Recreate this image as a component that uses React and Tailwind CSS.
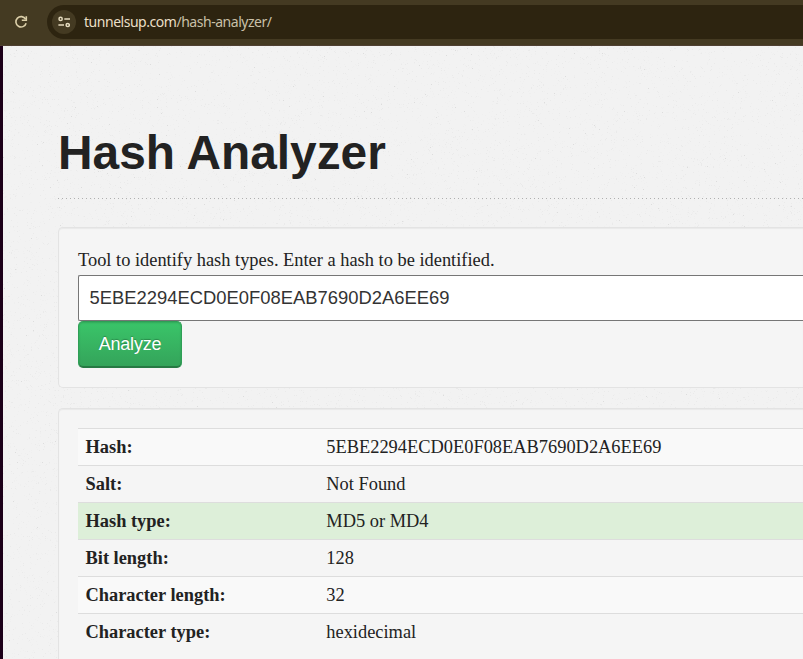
import React from "react";

const rows = [
  ["Hash:", "5EBE2294ECD0E0F08EAB7690D2A6EE69", "bg-[#f9f9f9]"],
  ["Salt:", "Not Found", ""],
  ["Hash type:", "MD5 or MD4", "bg-[#ddefd9]"],
  ["Bit length:", "128", ""],
  ["Character length:", "32", "bg-[#f9f9f9]"],
  ["Character type:", "hexidecimal", ""],
];

// Fine paper grain: deterministic one-pixel specks.
function specks(count, seed) {
  let a = seed;
  const next = () => {
    a = (a + 0x6d2b79f5) | 0;
    let t = Math.imul(a ^ (a >>> 15), 1 | a);
    t = (t + Math.imul(t ^ (t >>> 7), 61 | t)) ^ t;
    return ((t ^ (t >>> 14)) >>> 0) / 4294967296;
  };
  let d = "";
  for (let i = 0; i < count; i++) {
    d += `M${Math.floor(next() * 800)} ${Math.floor(next() * 613)}h1v1h-1z`;
  }
  return d;
}
const light = specks(18000, 7);
const mid = specks(9000, 91);
const dark = specks(500, 333);

function Grain() {
  return (
    <svg className="absolute inset-0" width="800" height="613" shapeRendering="crispEdges" aria-hidden="true">
      <path d={light} fill="#efefef" />
      <path d={mid} fill="#eaeaea" />
      <path d={dark} fill="#dddddd" />
    </svg>
  );
}

function BrowserBar() {
  return (
    <header className="flex h-[46px] shrink-0 items-start border-b border-[#4f4032] bg-[#443a22] pt-[5px]">
      <svg className="mt-[10px] ml-[14px] shrink-0" width="14" height="14" viewBox="0 0 14 14" fill="none" stroke="#dccfa9" strokeWidth="1.6">
        <path d="M11.6 4.2A5.2 5.2 0 1 0 12.1 8.2" />
        <path d="M12.3 1.2V5.3H7.8" />
      </svg>
      <div className="ml-[19px] flex h-[34px] flex-1 items-center rounded-l-full bg-[#2d2410] pl-[5px]">
        <span className="flex size-6 items-center justify-center rounded-full bg-[#443a22]">
          <svg width="12" height="12" viewBox="0 0 12 12" fill="none" stroke="#e6dcc0" strokeWidth="1.5">
            <circle cx="2.6" cy="2.9" r="1.6" />
            <path d="M6.3 2.9H12M0.4 9H6" />
            <circle cx="9.7" cy="9" r="1.6" />
          </svg>
        </span>
        <span className="ml-2 font-['Noto_Sans',sans-serif] text-[14px] leading-[20px] tracking-[-0.47px] whitespace-nowrap text-[#eadfc6]">
          tunnelsup.com<span className="text-[#c9c0a8]">/hash-analyzer/</span>
        </span>
      </div>
    </header>
  );
}

const card =
  "rounded-l-[5px] border border-r-0 border-[#e3e3e3] bg-[#f5f5f5] pl-[19px] shadow-[inset_0_1px_1px_rgba(0,0,0,0.05)]";

export default function App() {
  return (
    <div className="flex h-[659px] w-[803px] flex-col overflow-hidden bg-[#f2f2f2] text-[#222222]">
      <BrowserBar />
      <main className="relative min-h-0 flex-1 border-l-[3px] border-[#1c0019]">
        <Grain />
        <div className="relative pl-[55px] font-['Liberation_Serif',serif] text-[18.4px] leading-[20px]">
          <h1 className="pt-[79px] font-['Liberation_Sans',sans-serif] text-[47.84px] leading-[56px] font-bold whitespace-nowrap">
            Hash Analyzer
          </h1>
          <div className="mt-[17px] h-px bg-[repeating-linear-gradient(90deg,#b0b0b0_0px,#b0b0b0_1px,transparent_1px,transparent_4px)]" />
          <section className={`${card} mt-[28px] h-[161px] pt-[22px]`}>
            <p>Tool to identify hash types. Enter a hash to be identified.</p>
            <div className="mt-[5px] flex h-[46px] items-center rounded-l-[2px] border border-r-0 border-[#767676] bg-white pl-[10.6px] font-['Liberation_Sans',sans-serif] text-[#333333]">
              5EBE2294ECD0E0F08EAB7690D2A6EE69
            </div>
            <button className="block h-[47px] w-[104px] rounded-[5px] border border-[#2f9e56] border-b-[#277a44] bg-linear-to-b from-[#3ac569] to-[#34a35a] pb-[2px] font-['Liberation_Sans',sans-serif] text-[18px] tracking-[-0.2px] text-white shadow-[inset_0_1px_2px_rgba(0,0,0,0.15),inset_0_-1px_0_#277a44] [text-shadow:0_-1px_1px_rgba(0,0,0,0.25)]">
              Analyze
            </button>
          </section>
          <section className={`${card} mt-5 h-[270px] pt-[19px]`}>
            {rows.map(([label, value, tone]) => (
              <div key={label} className={`flex h-[37px] items-center border-t border-[#dddddd] pl-[7.5px] ${tone}`}>
                <span className="w-[240.8px] font-bold">{label}</span>
                <span>{value}</span>
              </div>
            ))}
          </section>
        </div>
      </main>
    </div>
  );
}
